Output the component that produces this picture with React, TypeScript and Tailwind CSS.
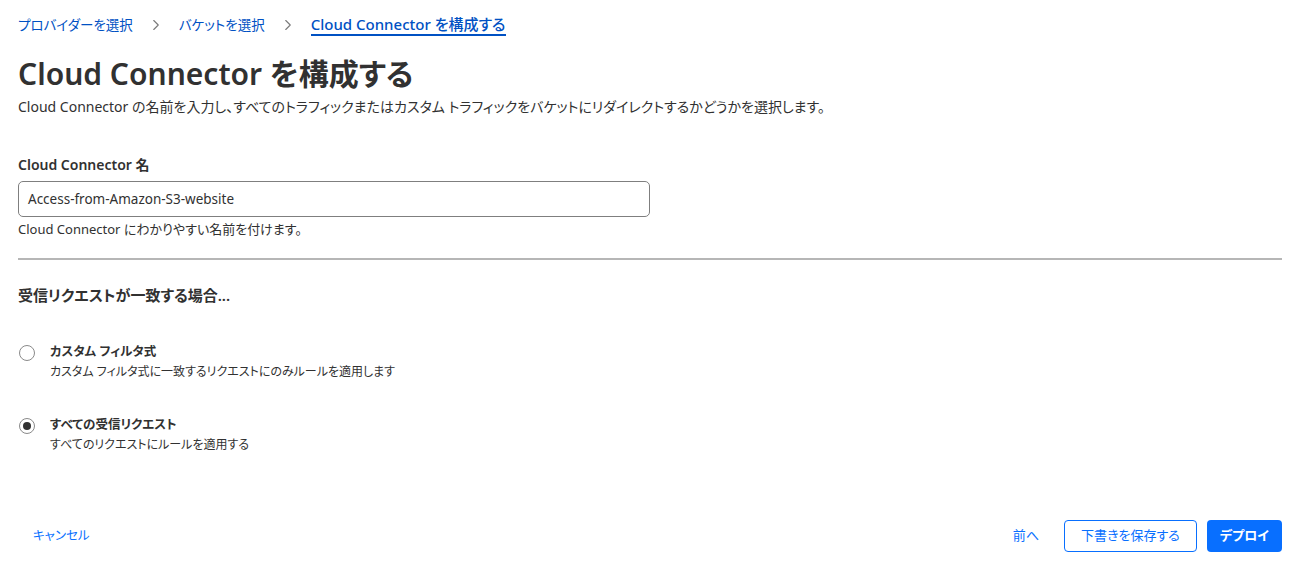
import React, { useState } from "react";
import { ChevronRight } from "lucide-react";

function Radio({ checked }: { checked: boolean }) {
  return (
    <span className="mt-[3px] flex h-[16px] w-[16px] shrink-0 items-center justify-center rounded-full border border-[#8a8a8a] bg-white">
      {checked && <span className="h-[8px] w-[8px] rounded-full bg-[#313131]" />}
    </span>
  );
}

const App: React.FC = () => {
  const [mode, setMode] = useState<"custom" | "all">("all");

  return (
    <div className="min-h-[572px] w-full bg-white pl-[18px] pr-[14px] font-['Noto_Sans','Noto_Sans_CJK_JP',sans-serif] text-[#313131] [font-feature-settings:'palt']">
      {/* Breadcrumb */}
      <nav className="flex h-[50px] items-center text-[13.5px] text-[#0051c3]">
        <span>プロバイダーを選択</span>
        <ChevronRight className="mx-[14px] h-[18px] w-[18px] text-[#7a7a7a]" strokeWidth={1.5} />
        <span>バケットを選択</span>
        <ChevronRight className="mx-[14px] h-[18px] w-[18px] text-[#7a7a7a]" strokeWidth={1.5} />
        <span className="border-b-2 border-[#0051c3] text-[15px] font-medium leading-[19px]">Cloud Connector を構成する</span>
      </nav>

      <h1 className="mt-[3px] text-[30px] font-semibold leading-[42px]">Cloud Connector を構成する</h1>
      <p className="mt-[2px] text-[14px] leading-[20px]">
        Cloud Connector の名前を入力し、すべてのトラフィックまたはカスタム トラフィックをバケットにリダイレクトするかどうかを選択します。
      </p>

      {/* Name field */}
      <div className="mt-[38px]">
        <label className="block text-[14px] font-semibold leading-[20px]">Cloud Connector 名</label>
        <div className="mt-[6px] flex h-[36px] w-[632px] items-center rounded-[5px] border border-[#7f7f7f] px-[9px] text-[13.5px]">
          Access-from-Amazon-S3-website
        </div>
        <p className="mt-[3px] text-[13px] leading-[18px]">Cloud Connector にわかりやすい名前を付けます。</p>
      </div>

      <hr className="mt-[20px] border-t-2 border-[#b6b6b6]" />

      {/* Match section */}
      <h2 className="mt-[24px] text-[15px] font-semibold leading-[22px]">受信リクエストが一致する場合...</h2>

      <div className="mt-[36px] flex flex-col gap-[33px]">
        <button className="flex items-start gap-[15px] pl-[1px] text-left" onClick={() => setMode("custom")}>
          <Radio checked={mode === "custom"} />
          <div>
            <div className="text-[12.5px] font-semibold leading-[20px]">カスタム フィルタ式</div>
            <div className="text-[12px] leading-[20px]">カスタム フィルタ式に一致するリクエストにのみルールを適用します</div>
          </div>
        </button>
        <button className="flex items-start gap-[15px] pl-[1px] text-left" onClick={() => setMode("all")}>
          <Radio checked={mode === "all"} />
          <div>
            <div className="text-[12.5px] font-semibold leading-[20px]">すべての受信リクエスト</div>
            <div className="text-[12px] leading-[20px]">すべてのリクエストにルールを適用する</div>
          </div>
        </button>
      </div>

      {/* Footer */}
      <div className="mt-[65px] flex items-center">
        <button className="px-[15px] text-[12.5px] text-[#086fff]">キャンセル</button>
        <div className="ml-auto flex items-center">
          <button className="px-[12px] text-[13px] text-[#086fff]">前へ</button>
          <button className="ml-[13px] h-[32px] rounded-[4px] border border-[#086fff] px-[16px] text-[13px] text-[#086fff]">
            下書きを保存する
          </button>
          <button className="ml-[10px] h-[32px] rounded-[4px] bg-[#086fff] px-[13px] text-[13px] font-semibold text-white">
            デプロイ
          </button>
        </div>
      </div>
    </div>
  );
};

export default App;
